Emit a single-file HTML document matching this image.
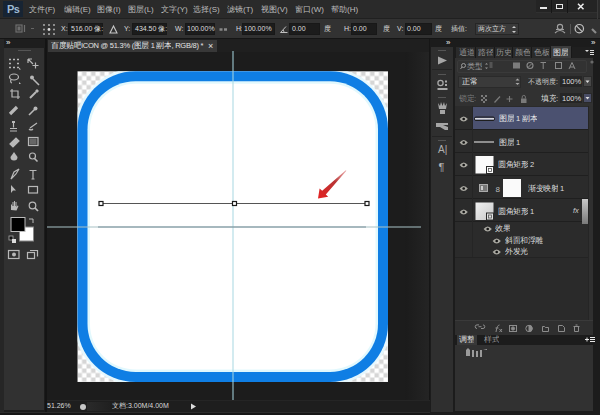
<!DOCTYPE html>
<html><head><meta charset="utf-8">
<style>
*{margin:0;padding:0;box-sizing:border-box}
html,body{width:600px;height:415px;overflow:hidden;background:#1c1c1c;font-family:"Liberation Sans",sans-serif;color:#cfcfcf}
.a{position:absolute}
.t{position:absolute;font-size:9px;line-height:10px;white-space:nowrap;color:#cccccc}
.m{position:absolute;font-size:8px;line-height:10px;white-space:nowrap;color:#bdbdbd;top:5px}
.o{top:24px;font-size:7px;color:#dcdcdc}
.in{position:absolute;background:#1c1c1c;border:1px solid #181818;height:12px;top:23px}
svg{position:absolute;overflow:visible}
.c{display:inline-block;width:1em;overflow:hidden;vertical-align:top}
.nocjk .c{-webkit-text-fill-color:transparent;background:
linear-gradient(currentColor,currentColor) 0.1em 2px/0.8em 1px no-repeat,
linear-gradient(currentColor,currentColor) 0.2em 5px/0.6em 1px no-repeat,
linear-gradient(currentColor,currentColor) 0.06em 8px/0.88em 1px no-repeat,
linear-gradient(currentColor,currentColor) 0.14em 2px/1px 6.5px no-repeat,
linear-gradient(currentColor,currentColor) 0.74em 2px/1px 6.5px no-repeat,
linear-gradient(currentColor,currentColor) 0.45em 1px/1px 8px no-repeat;opacity:0.8}
</style></head><body>
<!-- ============ MENU BAR ============ -->
<div class="a" style="left:0;top:0;width:600px;height:19px;background:#2a2a2a"></div>
<div class="a" style="left:0;top:18px;width:600px;height:1px;background:#202020"></div>
<div class="a" style="left:3px;top:1px;width:20px;height:16px;background:#172433"></div>
<div class="t" style="left:7px;top:3px;font-size:11px;line-height:12px;letter-spacing:-0.6px;font-weight:bold;color:#9dbad4">Ps</div>
<div class="m" style="left:29px"><span class="c">文</span><span class="c">件</span>(F)</div>
<div class="m" style="left:64px"><span class="c">编</span><span class="c">辑</span>(E)</div>
<div class="m" style="left:97px"><span class="c">图</span><span class="c">像</span>(I)</div>
<div class="m" style="left:128px"><span class="c">图</span><span class="c">层</span>(L)</div>
<div class="m" style="left:161px"><span class="c">文</span><span class="c">字</span>(Y)</div>
<div class="m" style="left:193px"><span class="c">选</span><span class="c">择</span>(S)</div>
<div class="m" style="left:227px"><span class="c">滤</span><span class="c">镜</span>(T)</div>
<div class="m" style="left:261px"><span class="c">视</span><span class="c">图</span>(V)</div>
<div class="m" style="left:295px"><span class="c">窗</span><span class="c">口</span>(W)</div>
<div class="m" style="left:331px"><span class="c">帮</span><span class="c">助</span>(H)</div>
<!-- window controls -->
<div class="a" style="left:536px;top:0;width:61px;height:13px;background:#242424;border-bottom:1px solid #303030"></div>
<div class="a" style="left:551px;top:0;width:1px;height:13px;background:#161616"></div>
<div class="a" style="left:567px;top:0;width:1px;height:13px;background:#161616"></div>
<div class="a" style="left:597px;top:0;width:1px;height:19px;background:#3a3a3a"></div>
<div class="a" style="left:540px;top:7px;width:7px;height:1.5px;background:#e8e8e8"></div>
<div class="a" style="left:556px;top:3.5px;width:7px;height:5px;border:1.5px solid #e8e8e8"></div>
<svg style="left:577px;top:3px" width="8" height="7"><path d="M1 0.8L6.5 6.2M6.5 0.8L1 6.2" stroke="#eee" stroke-width="1.5"/></svg>

<!-- ============ OPTIONS BAR ============ -->
<div class="a" style="left:0;top:19px;width:600px;height:19px;background:#323232"></div>
<div class="a" style="left:0;top:38px;width:600px;height:1px;background:#151515"></div>
<svg style="left:0;top:0" width="600" height="415">
 <rect x="16" y="25" width="6" height="7" fill="none" stroke="#6e6e6e" stroke-width="1.2"/><rect x="17.5" y="26.5" width="3" height="4" fill="#6e6e6e"/><path d="M24.5 25v7" stroke="#6e6e6e" stroke-width="1.2"/>
 <path d="M31 28.5h3" stroke="#666" stroke-width="1"/>
 <g fill="#b8b8b8"><circle cx="44" cy="25" r="0.9"/><circle cx="49" cy="25" r="0.9"/><circle cx="54" cy="25" r="0.9"/><circle cx="44" cy="29.5" r="0.9"/><circle cx="49" cy="29.5" r="1.4" fill="#ddd"/><circle cx="54" cy="29.5" r="0.9"/><circle cx="44" cy="34" r="0.9"/><circle cx="49" cy="34" r="0.9"/><circle cx="54" cy="34" r="0.9"/></g>
 <path d="M110 33l3.5-7 3.5 7z" fill="none" stroke="#c8c8c8" stroke-width="1.1"/>
 <path d="M219.5 29.5h3M224 29.5h3" stroke="#888" stroke-width="2.5"/>
 <path d="M280.5 32.5h7M280.5 32.5l5.5-6M284 32.5a3.5 3.5 0 0 0 -1-2.5" fill="none" stroke="#c0c0c0" stroke-width="1"/>
</svg>
<div class="t o" style="left:61px">X:</div>
<div class="in" style="left:68px;width:35px"></div>
<div class="t o" style="left:71px">516.00 <span class="c">像</span>:</div>
<div class="t o" style="left:124px">Y:</div>
<div class="in" style="left:132px;width:35px"></div>
<div class="t o" style="left:135px">434.50 <span class="c">像</span>:</div>
<div class="t o" style="left:175px">W:</div>
<div class="in" style="left:185px;width:30px"></div>
<div class="t o" style="left:187px">100.00%</div>
<div class="t o" style="left:236px">H:</div>
<div class="in" style="left:242px;width:33px"></div>
<div class="t o" style="left:244px">100.00%</div>
<div class="in" style="left:289px;width:31px"></div>
<div class="t o" style="left:292px">0.00</div>
<div class="t o" style="left:324px"><span class="c">度</span></div>
<div class="t o" style="left:344px">H:</div>
<div class="in" style="left:351px;width:26px"></div>
<div class="t o" style="left:353px">0.00</div>
<div class="t o" style="left:383px"><span class="c">度</span></div>
<div class="t o" style="left:397px">V:</div>
<div class="in" style="left:405px;width:27px"></div>
<div class="t o" style="left:407px">0.00</div>
<div class="t o" style="left:435px"><span class="c">度</span></div>
<div class="t o" style="left:451px"><span class="c">插</span><span class="c">值</span>:</div>
<div class="a" style="left:475px;top:23px;width:44px;height:12px;background:#3a3a3a;border:1px solid #262626"></div>
<div class="t o" style="left:478px"><span class="c">两</span><span class="c">次</span><span class="c">立</span><span class="c">方</span></div>
<svg style="left:0;top:0" width="600" height="415"><path d="M512 28l2-2 2 2zM512 31l2 2 2-2z" fill="#ccc"/></svg>
<svg style="left:0;top:0" width="600" height="415">
 <g fill="none" stroke="#a0a0a0" stroke-width="1.1"><circle cx="560" cy="27" r="2.6"/><path d="M555 33q5-5 10 0"/><path d="M556 29.5h8"/></g>
 <path d="M570.5 24V34" stroke="#555"/>
 <circle cx="579.3" cy="28.7" r="4.2" fill="none" stroke="#c0c0c0" stroke-width="1.2"/><path d="M576.4 25.8L582.2 31.6" stroke="#c0c0c0" stroke-width="1.2"/>
 <path d="M592 29l4 4" stroke="#8a8a8a" stroke-width="2.2"/>
</svg>
<!-- ============ LEFT TOOLS PANEL ============ -->
<div class="a" style="left:0;top:39px;width:4px;height:376px;background:#262626"></div>
<div class="a" style="left:4px;top:39px;width:41px;height:9px;background:#1e1e1e"></div>
<div class="t" style="left:6px;top:38px;font-size:8px;color:#eee">»</div>
<div class="a" style="left:4px;top:48px;width:40px;height:362px;background:#313131"></div>
<div class="a" style="left:18px;top:50px;width:13px;height:1px;background:#555"></div>
<svg style="left:0;top:0" width="600" height="415">
 <g fill="none" stroke="#b8b8b8" stroke-width="1.2">
  <!-- marquee -->
  <path d="M9 59.5h2M13 59.5h2M17 59.5h2M9 63.5h2M17 63.5h2M9 67.5h2M13 67.5h2M17 67.5h2" stroke-width="1.6"/>
  <!-- move -->
  <path d="M28 59l5 5M28 59v4M28 59h4"/>
  <path d="M35.5 62.5v6M32.5 65.5h6"/>
  <!-- lasso -->
  <ellipse cx="14" cy="77" rx="4.5" ry="3"/><path d="M11 79.5q-1 3 1 3.5"/>
  <!-- magic wand -->
  <path d="M33 79l6 6" stroke-width="1.6"/>
  <!-- crop -->
  <path d="M12 89v8h8M10 91h8v8"/>
  <!-- eyedropper -->
  <path d="M30 98l6-6" stroke-width="2"/>
  <!-- healing -->
  <path d="M10 114l7-7" stroke-width="3.2"/>
  <!-- brush -->
  <path d="M29 115l6-6" stroke-width="1.6"/>
  <!-- stamp -->
  <path d="M13.5 122.5v5M10 128.5h7M10 131h7"/>
  <!-- history brush -->
  <path d="M30 128l7-5M29 129q2 2 4 0"/>
  <!-- eraser -->
  <path d="M10 144l6-6 3 3-6 6z" fill="#b8b8b8"/>
  <!-- gradient -->
  <rect x="28.5" y="137.5" width="9.5" height="8"/>
  <!-- dodge -->
  <circle cx="32.5" cy="156" r="3"/><path d="M34.5 158.5l3 3" stroke-width="1.6"/>
  <!-- pen -->
  <path d="M11 179l3-7 5-3-3 5z"/>
  <!-- T -->
  <path d="M29.5 170.5h7M33 170.5v8.5M31.5 179h3"/>
  <!-- rect shape -->
  <rect x="28.5" y="186.5" width="9" height="6.5"/>
  <!-- zoom -->
  <circle cx="32.5" cy="205.5" r="3.3"/><path d="M35 208l3 3" stroke-width="1.7"/>
  <!-- quick mask -->
  <rect x="8.5" y="250.5" width="10.5" height="8"/>
  <!-- screen mode -->
  <rect x="27.5" y="252.5" width="7" height="6"/><path d="M30 250.5h7.5v6"/>
 </g>
 <g fill="#b8b8b8">
  <polygon points="19,67.5 21,69.5 19,69.5"/>
  <polygon points="19,82 21,84 19,84"/>
  <circle cx="32" cy="77.5" r="2"/>
  <path d="M35 91l2-2 2 2-2 2z"/>
  <circle cx="35.5" cy="108.5" r="2"/>
  <path d="M12 121h3v2h-3z"/>
  <path d="M14 152l3.5 5a3.5 3.5 0 1 1-7 0z"/>
  <path d="M11 193l0-8 5 5.5h-3z"/>
  <path d="M11 210v-5l1-1v2h0.5v-4l1 0v4h0.5v-5h1v5h0.5v-4h1v5l1-1.5 1 0.5-2 4.5z"/>
  <circle cx="14" cy="254.5" r="2"/>
  <rect x="29.5" y="138.5" width="7" height="6" fill="#666"/>
 </g>
 <!-- color swatches -->
 <rect x="19.5" y="227" width="14" height="14" fill="#fff" stroke="#888" stroke-width="1"/>
 <rect x="11" y="217.5" width="14" height="14" fill="#000" stroke="#bbb" stroke-width="1"/>
 <path d="M29 219h4v4" fill="none" stroke="#bbb" stroke-width="1"/>
 <rect x="9" y="236" width="4" height="4" fill="#111" stroke="#aaa" stroke-width="0.8"/><rect x="12" y="239" width="4" height="4" fill="#ddd"/>
</svg>


<!-- ============ DOC TAB BAR ============ -->
<div class="a" style="left:45px;top:39px;width:2px;height:376px;background:#141414"></div>
<div class="a" style="left:47px;top:39px;width:383px;height:13px;background:#1f1f1f"></div>
<div class="a" style="left:48px;top:40px;width:169px;height:12px;background:#383838"></div>
<div class="t" style="left:51px;top:41px;font-size:7.5px;letter-spacing:-0.25px;color:#e4e4e4"><span class="c">百</span><span class="c">度</span><span class="c">贴</span><span class="c">吧</span>ICON @ 51.3% (<span class="c">图</span><span class="c">层</span> 1 <span class="c">副</span><span class="c">本</span>, RGB/8) *</div>
<div class="t" style="left:208px;top:41px;font-size:9px;color:#e0e0e0">×</div>

<!-- ============ PASTEBOARD / CANVAS ============ -->
<div class="a" style="left:47px;top:52px;width:383px;height:350px;background:#1c1c1c"></div>
<div class="a" style="left:405px;top:52px;width:24px;height:348px;background:linear-gradient(90deg,#1b1b1b,#242424)"></div>
<div class="a" style="left:429px;top:39px;width:2px;height:376px;background:#161616"></div>
<svg style="left:0;top:0" width="600" height="415">
  <defs>
    <pattern id="chk" x="77.5" y="71.5" width="9" height="9" patternUnits="userSpaceOnUse">
      <rect width="9" height="9" fill="#ffffff"/>
      <rect x="4.5" width="4.5" height="4.5" fill="#d6d6d6"/>
      <rect y="4.5" width="4.5" height="4.5" fill="#d6d6d6"/>
    </pattern>
  </defs>
  <rect x="77.5" y="71.3" width="310.5" height="310.7" fill="url(#chk)"/>
  <clipPath id="cv"><rect x="77.5" y="71.3" width="310.5" height="310.7"/></clipPath>
  <g clip-path="url(#cv)">
  <rect x="76.5" y="70.3" width="312.5" height="312.7" rx="59" ry="59" fill="none" stroke="#e4f8ff" stroke-width="3.2" opacity="0.9"/>
  </g>
  <rect x="77.5" y="71.3" width="310.5" height="310.7" rx="58" ry="58" fill="#0f7ee4"/>
  <rect x="87.5" y="81.3" width="290.5" height="290.7" rx="48" ry="48" fill="#e2f8fd"/>
  <rect x="90" y="83.8" width="285.5" height="285.7" rx="45.5" ry="45.5" fill="#ffffff"/>
  <!-- guides -->
  <rect x="232.5" y="51" width="1" height="349" fill="#a8d8e2"/>
  <rect x="47" y="226.5" width="374" height="1" fill="#a8c2c6"/>
  <rect x="98" y="226.5" width="268" height="1" fill="#7b9099"/>
  <!-- path -->
  <rect x="101" y="203" width="266" height="1" fill="#555"/>
  <rect x="99" y="201.5" width="4" height="4" fill="#fff" stroke="#1a1a1a" stroke-width="1.2"/>
  <rect x="232.5" y="201.5" width="4" height="4" fill="#fff" stroke="#1a1a1a" stroke-width="1.2"/>
  <rect x="365" y="201.5" width="4" height="4" fill="#fff" stroke="#1a1a1a" stroke-width="1.2"/>
  <!-- red arrow -->
  <defs><linearGradient id="ag" x1="346" y1="170" x2="318" y2="198" gradientUnits="userSpaceOnUse"><stop offset="0" stop-color="#d86060" stop-opacity="0.5"/><stop offset="0.4" stop-color="#b83434"/><stop offset="1" stop-color="#e42222"/></linearGradient></defs>
  <polygon points="345.8,170.2 322.2,190.8 319.6,188.6 318,198.6 328.2,196.8 325.8,194.4 346.4,170.8" fill="url(#ag)"/>
</svg>

<!-- ============ STATUS BAR ============ -->
<div class="a" style="left:47px;top:400px;width:383px;height:12px;background:#1e1e1e;border-top:1px solid #252525"></div>
<div class="a" style="left:0;top:412px;width:430px;height:1px;background:#2c2c2c"></div>
<div class="a" style="left:0;top:413px;width:430px;height:2px;background:#161616"></div>
<div class="a" style="left:87px;top:402px;width:23px;height:9px;background:linear-gradient(90deg,#2a2a2a,#202020)"></div>
<div class="t" style="left:47px;top:401px;font-size:7px;color:#d8d8d8">51.26%</div>
<div class="a" style="left:79.5px;top:403.5px;width:6.5px;height:6.5px;border-radius:50%;background:#c8c8c8"></div>
<div class="t" style="left:112px;top:401px;font-size:7px;color:#d8d8d8"><span class="c">文</span><span class="c">档</span>:3.00M/4.00M</div>
<svg style="left:0;top:0" width="600" height="415"><path d="M191 403.5l5 3-5 3z" fill="#ddd"/></svg>

<!-- ============ ICON COLUMN ============ -->
<div class="a" style="left:430px;top:39px;width:25px;height:376px;background:#1c1c1c"></div>
<div class="a" style="left:431px;top:47px;width:22px;height:365px;background:#2f2f2f"></div>
<div class="t" style="left:446px;top:38px;font-size:8px;color:#eee">»</div>
<svg style="left:0;top:0" width="600" height="415">
 <g stroke="#555" stroke-width="1"><path d="M438 50.5H446M438 74.5H446M438 97.5H446M438 140.5H446"/></g>
 <g stroke="#242424" stroke-width="1"><path d="M432 69.5H452M432 136.5H452"/></g>
 <polygon points="438,56.5 447,60.5 438,64.5" fill="#a6a6a6"/>
 <g fill="#a8a8a8"><circle cx="440.5" cy="83" r="2.6" fill="none" stroke="#a8a8a8" stroke-width="1.3"/><rect x="445" y="80.5" width="2" height="2"/><rect x="445" y="84" width="2" height="2"/><rect x="437.5" y="88" width="10" height="2"/></g>
 <g fill="#a6a6a6"><path d="M438 103l2 3 1-4 1.5 4 1.5-4 1 4 2-3-1 6h-7z"/><rect x="440" y="110" width="5" height="4"/></g>
 <g fill="#a6a6a6"><path d="M436 123h12v2h-5l5 2v3h-3l-5-3h-4z"/></g>
 <text x="438" y="153" font-size="10" fill="#b0b0b0" font-family="Liberation Sans">A|</text>
 <text x="438.5" y="171" font-size="11" fill="#b0b0b0" font-family="Liberation Sans">¶</text>
</svg>

<!-- ============ LAYERS PANEL ============ -->
<div class="a" style="left:455px;top:39px;width:145px;height:376px;background:#1c1c1c"></div>
<div class="t" style="left:591px;top:38px;font-size:8px;color:#eee">»</div>
<!-- tabs row -->
<div class="a" style="left:456px;top:47px;width:137px;height:11px;background:#1f1f1f"></div>
<div class="a" style="left:456px;top:47px;width:115px;height:11px;background:#2a2a2a"></div>
<div class="a" style="left:551px;top:46px;width:20px;height:12px;background:#3b3b3b"></div>
<div class="t" style="left:459px;top:48px;font-size:7.5px;color:#959595"><span class="c">通</span><span class="c">道</span></div>
<div class="t" style="left:478px;top:48px;font-size:7.5px;color:#959595"><span class="c">路</span><span class="c">径</span></div>
<div class="t" style="left:496px;top:48px;font-size:7.5px;color:#959595"><span class="c">历</span><span class="c">史</span></div>
<div class="t" style="left:515px;top:48px;font-size:7.5px;color:#959595"><span class="c">颜</span><span class="c">色</span></div>
<div class="t" style="left:534px;top:48px;font-size:7.5px;color:#959595"><span class="c">色</span><span class="c">板</span></div>
<div class="t" style="left:553px;top:48px;font-size:7.5px;color:#e0e0e0"><span class="c">图</span><span class="c">层</span></div>
<svg style="left:0;top:0" width="600" height="415"><g stroke="#181818"><path d="M475.5 47V58M494.5 47V58M512.5 47V58M531.5 47V58M550.5 47V58M571.5 47V58"/></g>
<path d="M585 50l2 2 2-2z" fill="#ddd"/><path d="M590 50.5h4M590 52.5h4M590 54.5h4" stroke="#ddd" stroke-width="1"/></svg>
<!-- panel body -->
<div class="a" style="left:455px;top:58px;width:138px;height:263px;background:#313131"></div>
<!-- filter row -->
<div class="a" style="left:457px;top:60px;width:130px;height:13px;background:#323232;border:1px solid #3a3a3a;border-radius:2px"></div>
<svg style="left:0;top:0" width="600" height="415">
 <g fill="none" stroke="#9a9a9a" stroke-width="1"><circle cx="463.5" cy="65.5" r="2"/><path d="M462 67l-1.5 2"/></g>
 
 <path d="M485 64.5l1.5-1.5 1.5 1.5zM485 67.5l1.5 1.5 1.5-1.5z" fill="#999"/>
 <path d="M489.5 63h3M489.5 65h3M489.5 67h3" stroke="#888" stroke-width="0.8"/>
 <rect x="513" y="62.5" width="7" height="6" fill="#7c7c7c"/>
 <circle cx="530" cy="65.5" r="3" fill="none" stroke="#8a8a8a" stroke-width="1.1"/><path d="M528.2 67.3l3.6-3.6" stroke="#8a8a8a"/>
 <path d="M540.5 62.5H546M543.2 62.5V69" stroke="#8a8a8a" stroke-width="1"/>
 <rect x="555.5" y="62.5" width="6" height="6" fill="none" stroke="#8a8a8a" stroke-width="1"/>
 <path d="M569 69l3-6.5 3 6.5M570 67h4" fill="none" stroke="#8a8a8a" stroke-width="1"/>
 <circle cx="592" cy="62" r="1.6" fill="#6a6a6a"/>
</svg>
<div class="t" style="left:467px;top:62px;font-size:7.5px;color:#9a9a9a"><span class="c">类</span><span class="c">型</span></div>
<!-- blend row -->
<div class="a" style="left:458px;top:76px;width:63px;height:12px;background:#3a3a3a;border:1px solid #2a2a2a"></div>
<div class="t" style="left:462px;top:77px;font-size:7.5px;color:#e0e0e0"><span class="c">正</span><span class="c">常</span></div>
<svg style="left:0;top:0" width="600" height="415"><path d="M515.5 80.5l2-2 2 2zM515.5 83l2 2 2-2z" fill="#aaa"/></svg>
<div class="t" style="left:528px;top:77px;font-size:7px;color:#d0d0d0"><span class="c">不</span><span class="c">透</span><span class="c">明</span><span class="c">度</span>:</div>
<div class="a" style="left:560px;top:76px;width:22px;height:11px;background:#262626"></div>
<div class="t" style="left:562px;top:77px;font-size:7.5px;color:#ddd">100%</div>
<div class="a" style="left:583px;top:76px;width:9px;height:11px;background:#474747;border:1px solid #2a2a2a"></div>
<svg style="left:0;top:0" width="600" height="415"><path d="M585.5 80.5h4l-2 2.5z" fill="#ddd"/></svg>
<!-- lock row -->
<div class="t" style="left:459px;top:94px;font-size:7.5px;color:#7c7c7c"><span class="c">锁</span><span class="c">定</span>:</div>
<svg style="left:0;top:0" width="600" height="415">
 <g fill="#7a7a7a"><rect x="481" y="95" width="2" height="2"/><rect x="483" y="97" width="2" height="2"/><rect x="481" y="99" width="2" height="2"/><rect x="485" y="99" width="2" height="2"/><rect x="485" y="95" width="2" height="2"/><rect x="483" y="101" width="2" height="2"/></g>
 <path d="M494.5 102.5l5.5-6" stroke="#7a7a7a" stroke-width="1.3"/>
 <path d="M506.5 99h6M509.5 96v6" stroke="#7a7a7a" stroke-width="1.1"/>
 <rect x="521" y="98.5" width="5.5" height="4.5" fill="#7a7a7a"/><path d="M522.2 98.5v-1.5a1.6 1.6 0 0 1 3.2 0v1.5" fill="none" stroke="#7a7a7a" stroke-width="0.9"/>
</svg>
<div class="t" style="left:541px;top:94px;font-size:7.5px;color:#ddd"><span class="c">填</span><span class="c">充</span>:</div>
<div class="a" style="left:560px;top:93px;width:22px;height:10px;background:#262626"></div>
<div class="t" style="left:562px;top:94px;font-size:7.5px;color:#ddd">100%</div>
<div class="a" style="left:583px;top:93px;width:9px;height:10px;background:#4a4e66;border:1px solid #2a2a2a"></div>
<svg style="left:0;top:0" width="600" height="415"><path d="M585.5 97h4l-2 2.5z" fill="#ddd"/></svg>

<!-- layer list -->
<div class="a" style="left:455px;top:106px;width:133px;height:151px;background:#2b2b2b"></div>
<div class="a" style="left:455px;top:257px;width:133px;height:64px;background:#2a2a2a;border-top:1px solid #232323"></div>
<div class="a" style="left:588px;top:106px;width:5px;height:215px;background:#303030;border-left:1px solid #252525"></div>
<div class="a" style="left:473px;top:107px;width:115px;height:22px;background:#4b5170"></div>
<svg style="left:0;top:0" width="600" height="415">
 <g stroke="#1f1f1f" stroke-width="1"><path d="M455 129.5H588M455 152.5H588M455 175.5H588M455 198.5H588M455 221.5H588"/></g>
 <path d="M472.5 106V257" stroke="#252525"/>
 <!-- eyes -->
 <g id="eye">
  <path d="M459.6 119q4.1-5.2 8.2 0q-4.1 5.2-8.2 0z" fill="#aaa9a2"/><circle cx="463.7" cy="119" r="1.3" fill="#141414"/>
 </g>
 <use href="#eye" y="23.5"/><use href="#eye" y="46"/><use href="#eye" y="69.5"/><use href="#eye" y="93"/>
 <use href="#eye" x="24" y="110"/><use href="#eye" x="33" y="122"/><use href="#eye" x="33" y="133"/>
 <!-- row1 thumb: line -->
 <rect x="474.5" y="117" width="20" height="3.5" rx="1.5" fill="none" stroke="#1e1e1e" stroke-width="1"/>
 <path d="M475 118.8H494" stroke="#f2f2f2" stroke-width="1.3"/>
 <!-- row2 thumb -->
 <path d="M474 142H494" stroke="#d0d0d0" stroke-width="1.2"/>
 <!-- row3 thumb -->
 <rect x="475.5" y="156" width="18" height="17.5" fill="#fafafa"/>
 <rect x="486.5" y="166.5" width="7" height="7" fill="#fafafa" stroke="#2a2a2a" stroke-width="1"/>
 <rect x="488.5" y="168.5" width="3" height="3" fill="none" stroke="#555" stroke-width="0.8"/>
 <!-- row4 -->
 <rect x="479.5" y="184.5" width="8" height="7" fill="#777" stroke="#aaa" stroke-width="1"/>
 <rect x="481" y="186" width="2" height="4" fill="#ccc"/>
 <text x="495.5" y="192" font-size="8" fill="#bbb" font-family="Liberation Sans">8</text>
 <rect x="503" y="179" width="18" height="18" fill="#fafafa"/>
 <!-- row5 thumb -->
 <defs><linearGradient id="g5" x1="0" y1="0" x2="1" y2="1"><stop offset="0" stop-color="#f0f0f0"/><stop offset="1" stop-color="#c8c8c8"/></linearGradient></defs>
 <rect x="475.5" y="202.5" width="18" height="17.5" fill="url(#g5)"/>
 <rect x="486.5" y="213" width="7" height="7" fill="#e0e0e0" stroke="#2a2a2a" stroke-width="1"/>
 <rect x="488.5" y="215" width="3" height="3" fill="none" stroke="#555" stroke-width="0.8"/>
 <defs><linearGradient id="sb" x1="0" y1="0" x2="0" y2="1"><stop offset="0" stop-color="#c8c8c8"/><stop offset="1" stop-color="#7a7a7a"/></linearGradient></defs><rect x="582" y="199" width="6" height="25" fill="url(#sb)"/>
</svg>
<div class="t" style="left:499px;top:114px;font-size:7.5px;color:#e8e8e8"><span class="c">图</span><span class="c">层</span> 1 <span class="c">副</span><span class="c">本</span></div>
<div class="t" style="left:499px;top:138px;font-size:7.5px;color:#ddd"><span class="c">图</span><span class="c">层</span> 1</div>
<div class="t" style="left:498px;top:160px;font-size:7.5px;color:#ddd"><span class="c">圆</span><span class="c">角</span><span class="c">矩</span><span class="c">形</span> 2</div>
<div class="t" style="left:528px;top:184px;font-size:7.5px;color:#ddd"><span class="c">渐</span><span class="c">变</span><span class="c">映</span><span class="c">射</span> 1</div>
<div class="t" style="left:498px;top:207px;font-size:7.5px;color:#ddd"><span class="c">圆</span><span class="c">角</span><span class="c">矩</span><span class="c">形</span> 1</div>
<div class="t" style="left:573px;top:206px;font-size:7.5px;font-style:italic;color:#ccc">fx</div>
<div class="t" style="left:495px;top:224px;font-size:7.5px;color:#ddd"><span class="c">效</span><span class="c">果</span></div>
<div class="t" style="left:505px;top:236px;font-size:7.5px;color:#ddd"><span class="c">斜</span><span class="c">面</span><span class="c">和</span><span class="c">浮</span><span class="c">雕</span></div>
<div class="t" style="left:505px;top:247px;font-size:7.5px;color:#ddd"><span class="c">外</span><span class="c">发</span><span class="c">光</span></div>

<!-- bottom toolbar -->
<div class="a" style="left:455px;top:320px;width:138px;height:15px;background:#2f2f2f;border-top:1px solid #3a3a3a"></div>
<svg style="left:0;top:0" width="600" height="415">
 <g fill="none" stroke="#8c8c8c" stroke-width="1">
  <path d="M477 328.5a1.8 1.8 0 0 1 0-3.6h2M483 324.9a1.8 1.8 0 0 1 0 3.6h-2M478.5 326.7h3"/>
  <path d="M496 332q1-7 3.5-7M495.5 328h3M499.5 329l2.5 3M502 329l-2.5 3"/>
  <rect x="509.5" y="325.5" width="7" height="6"/><circle cx="513" cy="328.5" r="1.6" fill="#8c8c8c"/>
  <circle cx="529" cy="328.5" r="3.2"/><path d="M529 325.3a3.2 3.2 0 0 1 0 6.4z" fill="#8c8c8c"/>
  <path d="M542.5 326.5v5h6v-4h-3l-1-1z"/>
  <path d="M558.5 325.5h4l2 2v4h-6z"/>
  <path d="M573.5 326.5h6M574.5 326.5v5h4v-5M575.5 325h2"/>
 </g>
</svg>
<!-- adjustments panel -->
<div class="a" style="left:456px;top:335px;width:137px;height:10px;background:#1c1c1c"></div>
<div class="a" style="left:457px;top:335px;width:20px;height:10px;background:#383838"></div>
<div class="t" style="left:459px;top:335px;font-size:7.5px;color:#ddd"><span class="c">调</span><span class="c">整</span></div>
<div class="t" style="left:484px;top:335px;font-size:7.5px;color:#999"><span class="c">样</span><span class="c">式</span></div>
<svg style="left:0;top:0" width="600" height="415"><path d="M585 339.5h4M587 337.5v4" stroke="#e8e8e8" stroke-width="1"/><path d="M590 337.5h5M590 339.5h5M590 341.5h5" stroke="#e8e8e8" stroke-width="1"/></svg>
<div class="a" style="left:455px;top:345px;width:138px;height:66px;background:#313131"></div>
<svg style="left:0;top:0" width="600" height="415">
 <g fill="#9a9a9a"><path d="M466 350l2-2 2 2v6h-4z"/><rect x="472" y="350" width="2" height="7"/><rect x="476" y="351" width="2" height="6"/><rect x="480" y="350" width="2" height="7"/><path d="M483 350l4-1v1z"/></g>
</svg>
<script>(function(){try{var c=document.createElement('canvas').getContext('2d');c.font='20px "Liberation Sans"';if(c.measureText('\u6587').width<18)document.body.className+=' nocjk';}catch(e){}})();</script>
</body></html>
